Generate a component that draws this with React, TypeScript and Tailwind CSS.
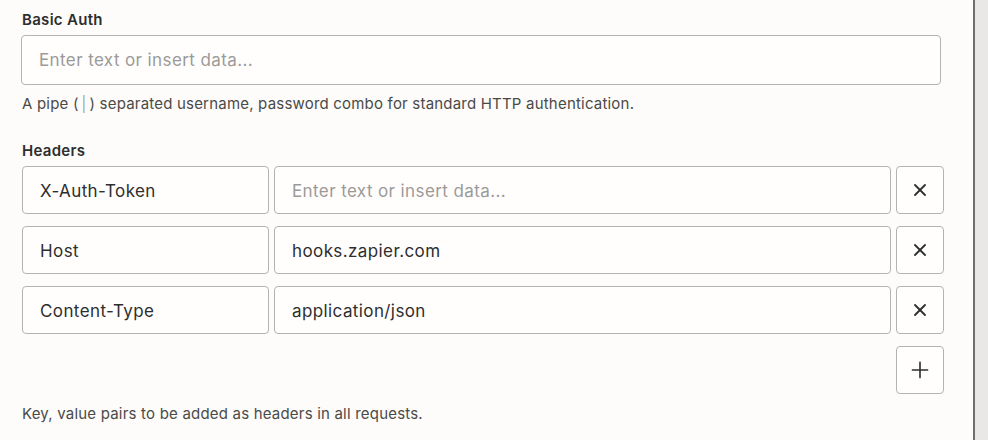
import { X, Plus } from 'lucide-react';

const headers = [
  { key: 'X-Auth-Token', value: '' },
  { key: 'Host', value: 'hooks.zapier.com' },
  { key: 'Content-Type', value: 'application/json' },
];

function Field({ value, className = '' }: { value: string; className?: string }) {
  return (
    <div
      className={`h-[48px] flex items-center px-[17px] pt-[3px] rounded-[4px] border border-[#b5b3b0] bg-[#fffefd] text-[17px] tracking-[0.4px] ${
        value ? 'text-[#2d2e2e]' : 'text-[#9b9a98]'
      } ${className}`}
    >
      {value || 'Enter text or insert data...'}
    </div>
  );
}

export default function App() {
  return (
    <div
      className="w-[988px] h-[440px] flex bg-[#fdfcfa] overflow-hidden"
      style={{ fontFamily: 'Inter, "Noto Sans", sans-serif' }}
    >
      <div className="w-[973px] pl-[21px] pt-[11px]">
        {/* Basic Auth */}
        <div className="pl-px text-[15px] tracking-[0.3px] font-semibold text-[#2d2e2e] leading-[18px]">Basic Auth</div>
        <div className="mt-[6px] w-[920px] h-[50px] flex items-center px-[17px] pt-[2px] rounded-[4px] border border-[#b5b3b0] bg-[#fffefd] text-[17px] tracking-[0.4px] text-[#9b9a98]">
          Enter text or insert data...
        </div>
        <p className="mt-[10px] pl-px text-[15px] tracking-[0.2px] leading-[18px] text-[#4a4a48]">
          A pipe (<span className="mx-[3px] text-[#8a8a88] font-light">|</span>) separated username, password combo for standard HTTP authentication.
        </p>

        {/* Headers */}
        <div className="mt-[29px] pl-px text-[15px] tracking-[0.3px] font-semibold text-[#2d2e2e] leading-[18px]">Headers</div>
        <div className="mt-[6px] w-[923px] flex flex-col gap-[12px] pl-px">
          {headers.map((h) => (
            <div key={h.key} className="flex gap-[5px]">
              <Field value={h.key} className="w-[247px] shrink-0" />
              <Field value={h.value} className="flex-1" />
              <button className="w-[48px] h-[48px] shrink-0 flex items-center justify-center rounded-[4px] border border-[#b5b3b0] bg-[#fffefd] text-[#2d2e2e]">
                <X className="w-[20px] h-[20px]" strokeWidth={2.2} />
              </button>
            </div>
          ))}
          <div className="flex justify-end">
            <button className="w-[48px] h-[48px] flex items-center justify-center rounded-[4px] border border-[#b5b3b0] bg-[#fffefd] text-[#2d2e2e]">
              <Plus className="w-[26px] h-[26px]" strokeWidth={1.5} />
            </button>
          </div>
        </div>
        <p className="mt-[11px] pl-px text-[15px] tracking-[0.2px] leading-[18px] text-[#4a4a48]">
          Key, value pairs to be added as headers in all requests.
        </p>
      </div>
      <div className="w-[2px] h-full bg-[#6e6e6e]" />
      <div className="flex-1 h-full bg-[#e9e8e7]" />
    </div>
  );
}
